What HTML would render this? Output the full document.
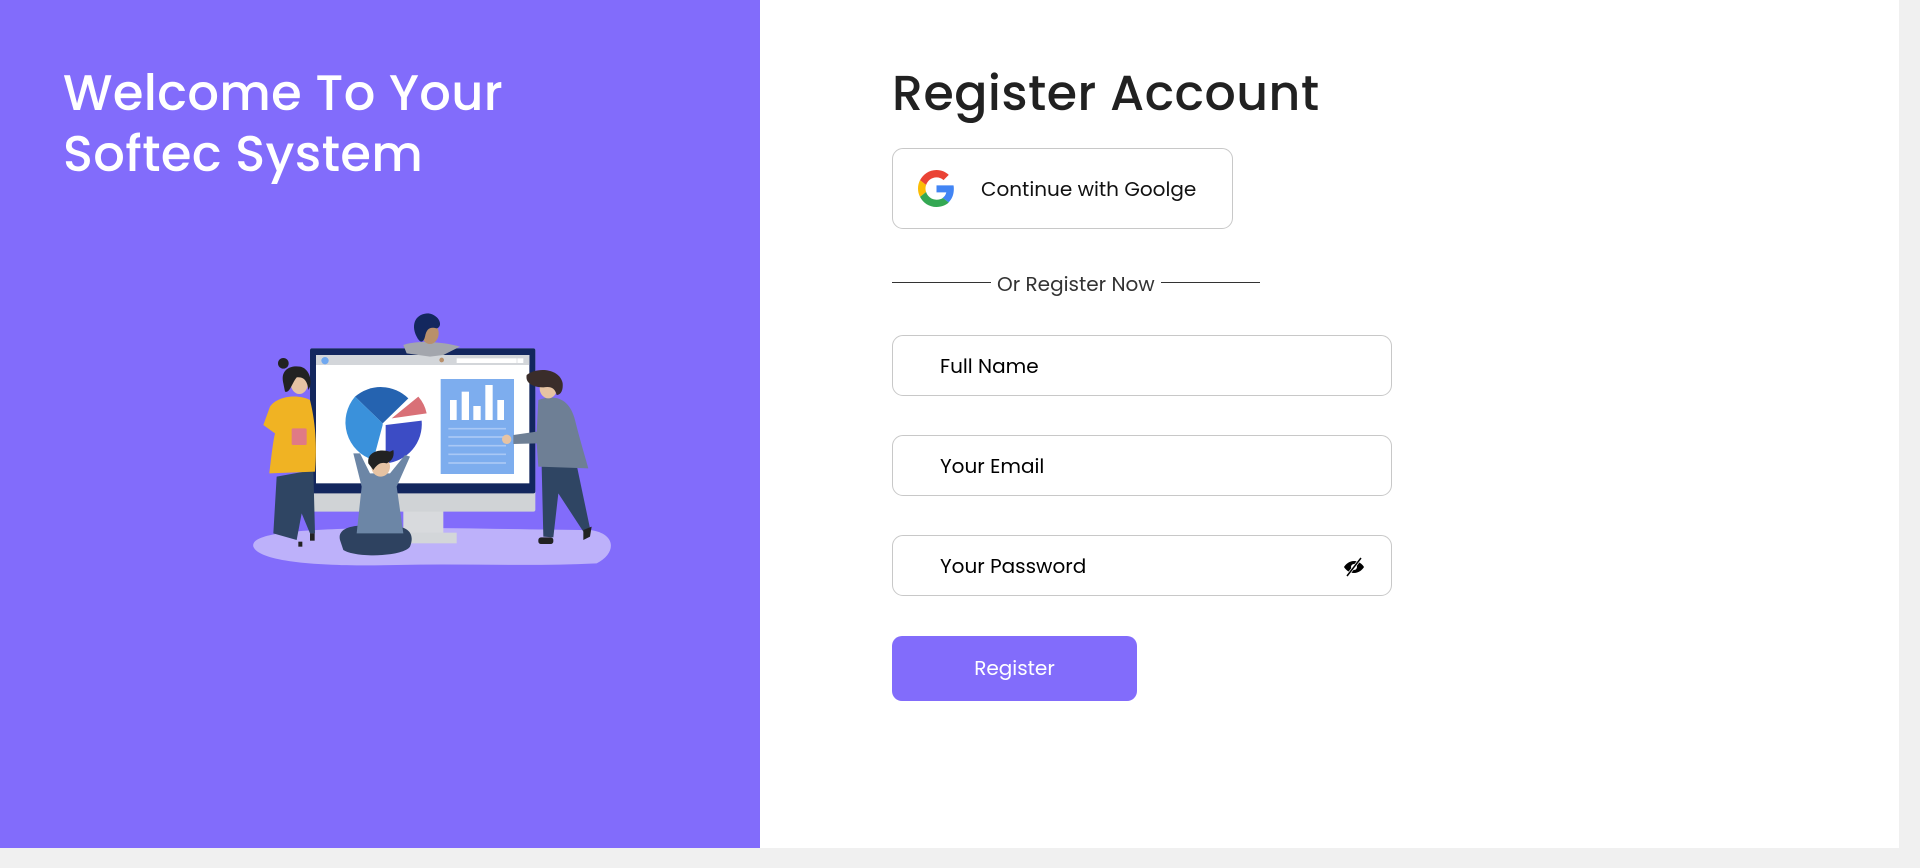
<!DOCTYPE html>
<html><head><meta charset="utf-8"><style>
*{margin:0;padding:0;box-sizing:border-box}
body{width:1920px;height:868px;overflow:hidden;background:#fff;font-family:"Poppins","Liberation Sans",sans-serif;position:relative}
.left{position:absolute;left:0;top:0;width:760px;height:848px;background:#826cfb}
.left h1{position:absolute;left:63px;top:63px;color:#fff;font-weight:500;font-size:49.5px;line-height:61px;letter-spacing:0.4px}
h2{position:absolute;left:892px;top:58px;font-size:49px;font-weight:500;color:#212121;letter-spacing:0.5px}
.gbtn{position:absolute;left:892px;top:148px;width:341px;height:81px;border:1px solid #c8c8c8;border-radius:11px}
.gbtn svg{position:absolute;left:25px;top:21px}
.gbtn span{position:absolute;left:88px;top:25px;font-size:20px;color:#111}
.div{position:absolute;left:892px;top:269px;width:368px;height:24px;font-size:20px;color:#333}
.div i{position:absolute;top:13px;height:1px;background:#333}
.div span{position:absolute;left:105px;top:0}
.inp{position:absolute;left:892px;width:500px;height:61px;border:1px solid #c8c8c8;border-radius:11px}
.inp span{position:absolute;left:47px;top:15px;font-size:20px;color:#000}
.btn{position:absolute;left:892px;top:636px;width:245px;height:65px;background:#826cfb;border-radius:10px;color:#fff;font-size:20px;text-align:center;line-height:65px}
.vs{position:absolute;left:1899px;top:0;width:21px;height:848px;background:#f0f0f0}
.hs{position:absolute;left:0;top:848px;width:1920px;height:20px;background:#f0f0f0}
</style></head><body>
<div class="left"><h1>Welcome To Your<br>Softec System</h1>
<svg style="position:absolute;left:230px;top:300px" width="400" height="280" viewBox="0 0 1200 840">
<path d="M70 740 C60 700 200 690 380 685 C600 680 900 690 1080 690 C1160 700 1160 760 1100 790 C900 800 700 790 500 795 C300 800 90 790 70 740Z" fill="#bdb1fa"/>
<rect x="520" y="630" width="120" height="75" fill="#d8dadd"/>
<rect x="495" y="698" width="185" height="32" fill="#d3d6d9"/>
<rect x="240" y="145" width="676" height="490" rx="6" fill="#d0d3d6"/>
<rect x="240" y="145" width="676" height="435" rx="6" fill="#13275e"/>
<rect x="258" y="165" width="640" height="385" fill="#fff"/>
<rect x="258" y="165" width="640" height="30" fill="#d3d6da"/>
<circle cx="285" cy="182" r="11" fill="#6fa8f0"/>
<rect x="680" y="175" width="180" height="14" fill="#fff"/>
<rect x="862" y="175" width="18" height="14" fill="#fff"/>
<path d="M458 370 L375 290 A118 118 0 0 1 535 295Z" fill="#2563b0"/>
<path d="M458 370 L375 290 A118 118 0 0 0 430 480 L458 375Z" fill="#3a91db"/>
<path d="M467 375 L575 362 A118 118 0 0 1 467 490Z" fill="#3c4cc5"/>
<path d="M485 355 L565 290 A110 110 0 0 1 590 340Z" fill="#d97077"/>
<rect x="632" y="237" width="220" height="285" fill="#7dadee"/>
<g fill="#fff"><rect x="660" y="300" width="20" height="60"/><rect x="695" y="275" width="22" height="85"/><rect x="730" y="318" width="22" height="42"/><rect x="766" y="255" width="22" height="105"/><rect x="802" y="300" width="20" height="60"/></g>
<g stroke="#a9c8f5" stroke-width="5"><line x1="655" y1="386" x2="828" y2="386"/><line x1="655" y1="411" x2="828" y2="411"/><line x1="655" y1="437" x2="828" y2="437"/><line x1="655" y1="463" x2="828" y2="463"/><line x1="655" y1="489" x2="828" y2="489"/></g>
<path d="M520 135 C560 120 640 125 690 140 L640 165 L600 170 L530 160 Z" fill="#a3a6ad"/>
<ellipse cx="600" cy="100" rx="26" ry="32" fill="#b9906b"/>
<path d="M560 110 C540 70 560 40 595 40 C630 45 640 80 620 85 C600 80 590 85 585 110 C580 130 570 130 560 110Z" fill="#13275e"/>
<circle cx="635" cy="180" r="7" fill="#b9906b"/>
<path d="M140 530 L130 700 L200 720 L215 640 L240 700 L255 700 L250 510 Z" fill="#2f4563"/>
<path d="M120 320 C140 290 200 280 240 300 C260 380 260 460 255 515 L118 520 C125 460 130 420 135 400 L100 375 Z" fill="#f0b323"/>
<ellipse cx="208" cy="250" rx="26" ry="32" fill="#e6c3a3"/>
<path d="M160 250 C150 210 180 195 210 200 C240 205 250 250 235 270 C232 240 220 230 200 232 C185 250 180 280 165 275Z" fill="#222"/>
<circle cx="160" cy="190" r="16" fill="#222"/>
<rect x="185" y="385" width="45" height="50" rx="4" fill="#e07a85"/>
<rect x="205" y="725" width="12" height="15" fill="#222"/><rect x="240" y="700" width="14" height="22" fill="#222"/>
<path d="M935 500 L940 710 L970 712 L985 580 L1060 695 L1080 685 L1040 495Z" fill="#2f4563"/>
<path d="M925 300 C980 280 1020 300 1035 360 C1050 420 1065 470 1075 505 L925 500 L920 430 L850 432 L850 405 L920 395Z" fill="#6e7f95"/>
<circle cx="830" cy="418" r="14" fill="#e6c3a3"/>
<ellipse cx="955" cy="265" rx="26" ry="30" fill="#e6c3a3"/>
<path d="M890 225 C920 200 990 205 998 250 C1000 275 990 285 980 285 C975 265 965 258 940 262 C910 262 885 250 890 225Z" fill="#3a2d2a"/>
<rect x="925" y="712" width="45" height="20" rx="8" fill="#222"/><path d="M1060 690 L1085 680 L1080 710 L1060 720Z" fill="#222"/>
<path d="M330 720 C320 680 380 670 450 680 C520 670 560 690 540 740 C520 770 380 775 340 750Z" fill="#2e4260"/>
<path d="M370 460 L395 560 L380 700 L520 700 L500 560 L540 470 L525 465 L480 520 L420 520 L390 460 Z" fill="#6c86a6"/>
<ellipse cx="452" cy="500" rx="28" ry="30" fill="#e6c3a3"/>
<path d="M415 490 C410 455 450 445 480 455 L490 450 C495 475 480 485 470 490 C450 485 440 495 430 510 Z" fill="#222"/>
</svg></div>
<h2>Register Account</h2>
<div class="gbtn"><svg width="37" height="37" viewBox="0 0 48 48"><path fill="#EA4335" d="M24 9.5c3.5 0 6.6 1.2 9.1 3.6l6.8-6.8C35.8 2.4 30.3 0 24 0 14.6 0 6.6 5.4 2.6 13.3l7.9 6.2C12.4 13.7 17.7 9.5 24 9.5z"/><path fill="#4285F4" d="M46.5 24.5c0-1.600-.1-3.1-.4-4.5H24v9h12.7c-.6 2.9-2.2 5.4-4.7 7.1l7.6 5.9c4.4-4.1 6.9-10.1 6.9-17.5z"/><path fill="#FBBC05" d="M10.5 28.6c-.5-1.4-.8-3-.8-4.6s.3-3.2.8-4.6l-7.9-6.2C.9 16.5 0 20.1 0 24s.9 7.5 2.6 10.8l7.9-6.2z"/><path fill="#34A853" d="M24 48c6.5 0 11.9-2.1 15.9-5.8l-7.6-5.9c-2.1 1.4-4.9 2.3-8.3 2.3-6.300 0-11.6-4.2-13.5-10l-7.9 6.2C6.6 42.6 14.6 48 24 48z"/></svg><span>Continue with Goolge</span></div>
<div class="div"><i style="left:0;width:99px"></i><span>Or Register Now</span><i style="left:269px;width:99px"></i></div>
<div class="inp" style="top:335px"><span>Full Name</span></div>
<div class="inp" style="top:435px"><span>Your Email</span></div>
<div class="inp" style="top:535px"><span>Your Password</span>
<svg style="position:absolute;left:449px;top:19px" width="24" height="24" viewBox="0 0 24 24"><path d="M12 6C7 6 3.5 9.5 2 12c1.5 2.5 5 6 10 6s8.5-3.5 10-6c-1.5-2.5-5-6-10-6z" fill="#000"/><circle cx="12" cy="12" r="3" fill="#fff"/><line x1="5" y1="21" x2="19" y2="3" stroke="#fff" stroke-width="3"/><line x1="5" y1="21" x2="19" y2="3" stroke="#000" stroke-width="1.5"/></svg></div>
<div class="btn">Register</div>
<div class="vs"></div><div class="hs"></div>
</body></html>
